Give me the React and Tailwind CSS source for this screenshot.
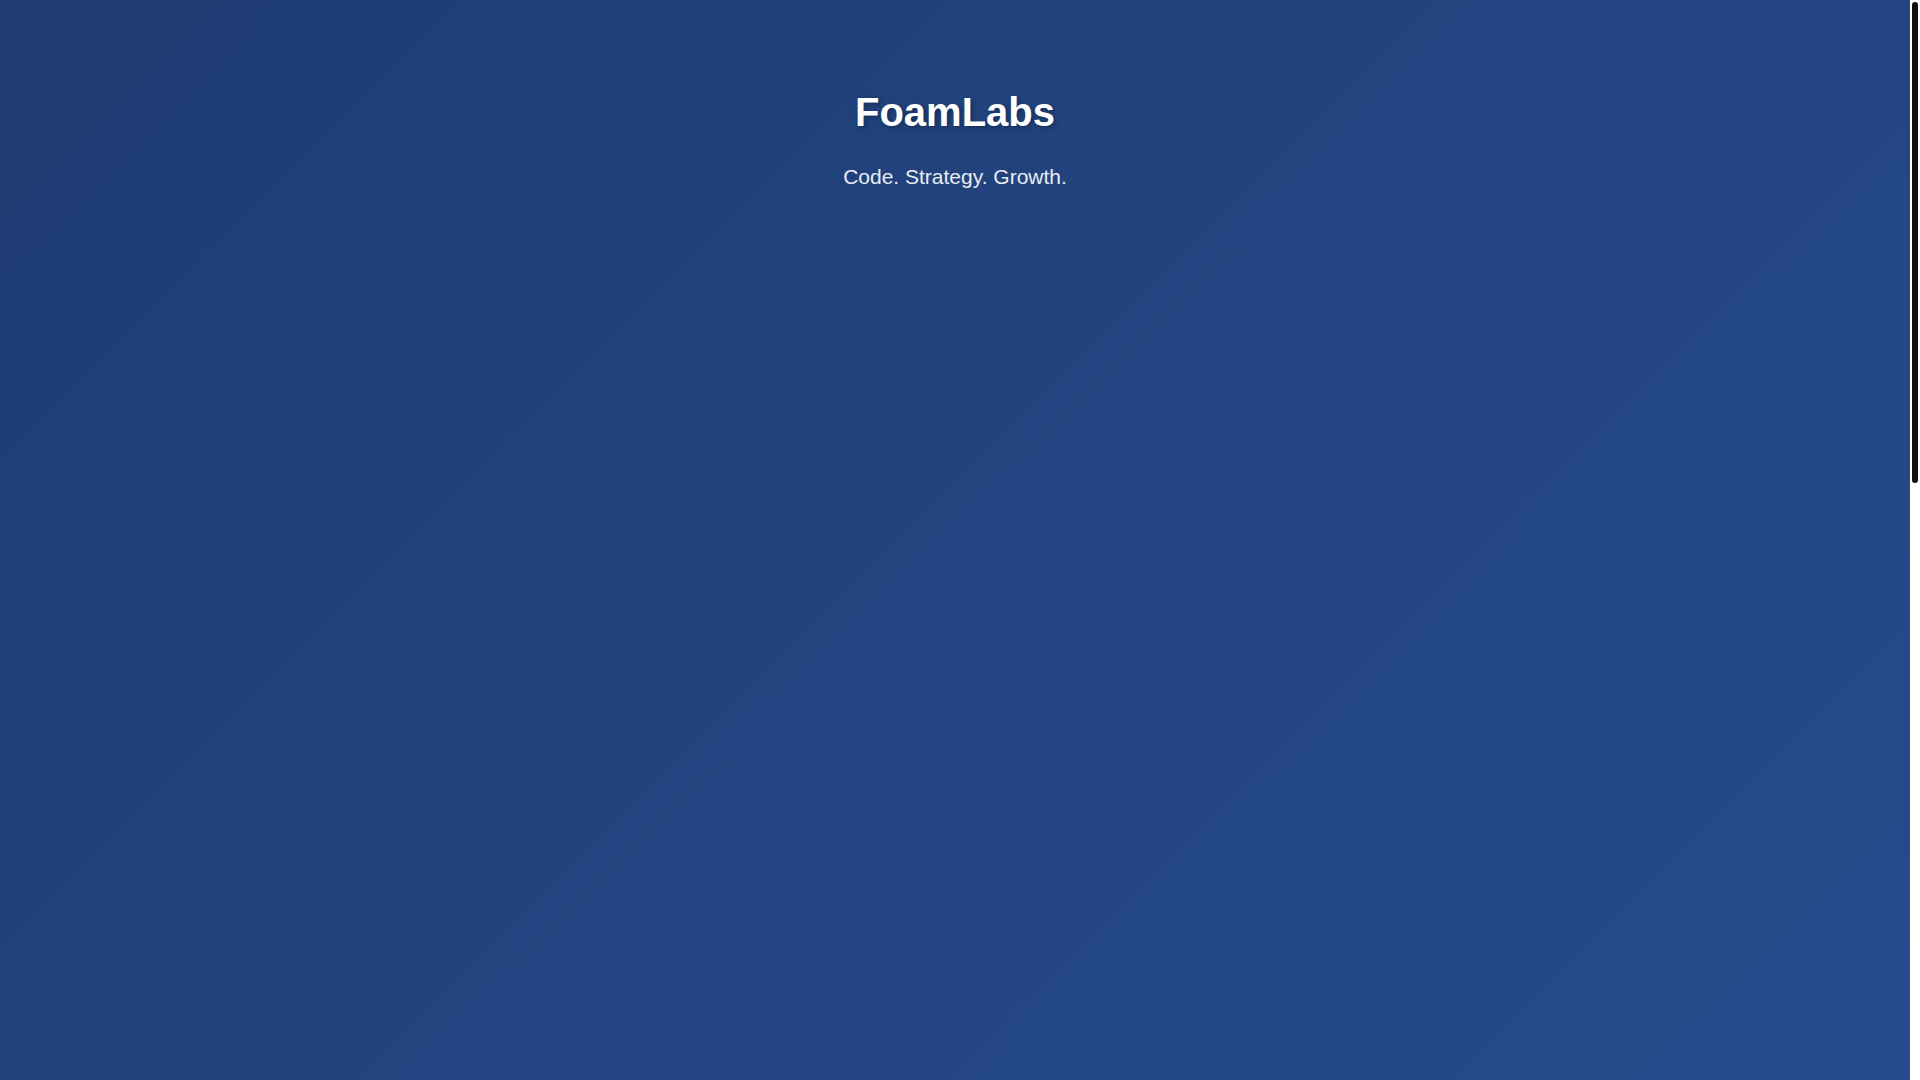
export default function App() {
  return (
    <div className="relative bg-white">
      <div className="mr-[10px] min-h-[2410px] bg-[linear-gradient(135deg,#1e3c72_0%,#2a5298_100%)] font-['Liberation_Sans',Arial,sans-serif] text-white">
        <header className="flex flex-col items-center pt-[89px] text-center">
          <h1 className="text-[40px] font-bold leading-[46px] [text-shadow:2px_2px_4px_rgba(0,0,0,0.3)]">
            FoamLabs
          </h1>
          <p className="mt-[30px] text-[21px] leading-[24px] text-white/90">
            Code. Strategy. Growth.
          </p>
        </header>
      </div>
      {/* page scroll rail */}
      <div className="fixed right-0 top-0 h-screen w-[10px] bg-white">
        <div className="mx-[2px] mt-[2px] h-[481px] w-[6px] rounded-[3px] bg-[#111111]" />
      </div>
    </div>
  );
}
